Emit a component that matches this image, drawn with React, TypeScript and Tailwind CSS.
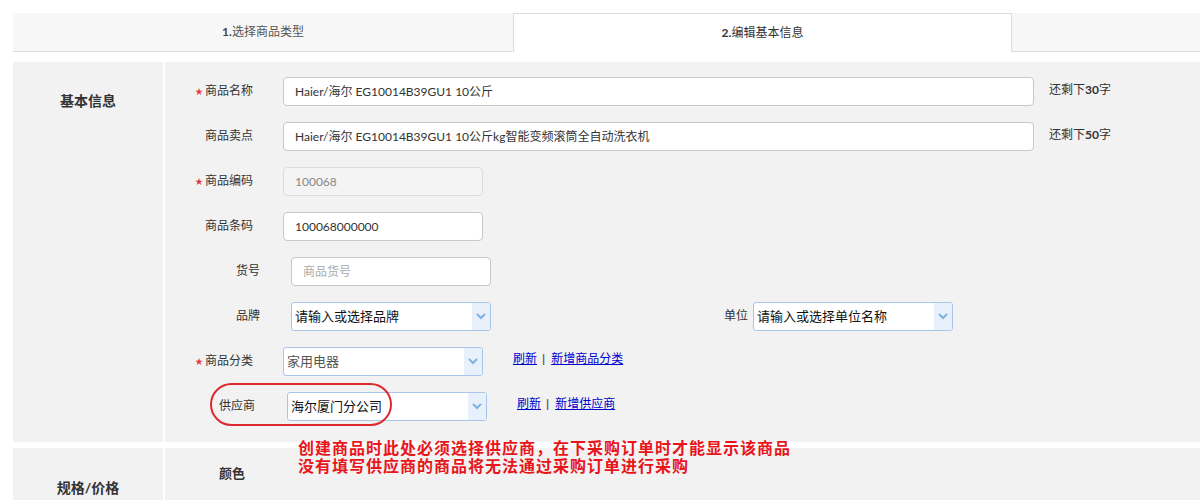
import React from 'react';

const FONT = { fontFamily: 'Lato, "Noto Sans CJK SC", sans-serif' };

function Star() {
  return <span className="mr-[2px] text-[8px] leading-none text-[#e4393c]">★</span>;
}

function Label({ width, star, children }: { width: string; star?: boolean; children: React.ReactNode }) {
  return (
    <div className={`${width} flex shrink-0 items-center justify-end self-start pt-[5px] text-[12px] text-[#333]`}>
      {star && <Star />}
      <span>{children}</span>
    </div>
  );
}

function Input({ value, className, disabled, placeholder }: { value?: string; className: string; disabled?: boolean; placeholder?: string }) {
  return (
    <div
      className={`${className} flex h-[29px] shrink-0 items-center rounded-[4px] border px-[11px] text-[12px] ${
        disabled ? 'border-[#dcdcdc] bg-[#f3f4f3] text-[#888]' : 'border-[#c8c8c8] bg-white text-[#333]'
      }`}
    >
      {value ? <span>{value}</span> : <span className="text-[#aaa]">{placeholder}</span>}
    </div>
  );
}

function Chevron() {
  return (
    <svg width="10" height="7" viewBox="0 0 10 7" fill="none">
      <path d="M1.5 1.5L5 5l3.5-3.5" stroke="#7fb3e2" strokeWidth="2" strokeLinecap="round" />
    </svg>
  );
}

function Select({ value, className, muted }: { value: string; className: string; muted?: boolean }) {
  return (
    <div className={`${className} flex h-[29px] w-[200px] shrink-0 items-stretch overflow-hidden rounded-[3px] border border-[#a8c6ea] bg-white`}>
      <span className={`flex flex-1 items-center pl-[3px] text-[13px] ${muted ? 'text-[#555]' : 'text-[#111]'}`}>{value}</span>
      <span className="flex w-[18px] items-center justify-center bg-[#e8f0fb]">
        <Chevron />
      </span>
    </div>
  );
}

function Links({ add, className }: { add: string; className: string }) {
  return (
    <div className={`${className} flex items-center self-start pt-[3px] text-[12px]`}>
      <a className="text-[#0000cc] underline">刷新</a>
      <span className="ml-[5px] mr-[6px] font-bold text-[#555]">|</span>
      <a className="text-[#0000cc] underline">{add}</a>
    </div>
  );
}

export default function App() {
  return (
    <div className="relative min-h-[500px] bg-white pl-[13px] pt-[13px]" style={FONT}>
      {/* Steps */}
      <div className="flex h-[39px] text-[12px]">
        <div className="flex w-[501px] items-center justify-center border-b border-r border-[#dcdcdc] bg-[#f7f7f7] text-[#555]">
          <b className="text-[#444]">1.</b>选择商品类型
        </div>
        <div className="flex w-[497px] items-center justify-center border-t border-[#dcdcdc] bg-white text-[#333]">
          <b>2.</b>编辑基本信息
        </div>
        <div className="flex-1 border-b border-l border-[#dcdcdc] bg-[#f7f7f7]" />
      </div>

      {/* 基本信息 */}
      <div className="mt-[10px] flex h-[380px] gap-[2px]">
        <div className="w-[150px] shrink-0 bg-[#f2f2f2] pt-[28px] text-center text-[14px] font-bold text-[#333]">基本信息</div>
        <div className="flex flex-1 flex-col gap-[16px] bg-[#f2f2f2] pt-[15px]">
          <div className="flex h-[29px]">
            <Label width="w-[88px]" star>商品名称</Label>
            <Input className="ml-[30px] w-[751px]" value="Haier/海尔 EG10014B39GU1 10公斤" />
            <span className="ml-[15px] self-start pt-[4px] text-[12px] text-[#333]">
              还剩下<b>30</b>字
            </span>
          </div>
          <div className="flex h-[29px]">
            <Label width="w-[88px]">商品卖点</Label>
            <Input className="ml-[30px] w-[751px]" value="Haier/海尔 EG10014B39GU1 10公斤kg智能变频滚筒全自动洗衣机" />
            <span className="ml-[15px] self-start pt-[4px] text-[12px] text-[#333]">
              还剩下<b>50</b>字
            </span>
          </div>
          <div className="flex h-[29px]">
            <Label width="w-[88px]" star>商品编码</Label>
            <Input className="ml-[30px] w-[200px]" value="100068" disabled />
          </div>
          <div className="flex h-[29px]">
            <Label width="w-[88px]">商品条码</Label>
            <Input className="ml-[30px] w-[200px]" value="100068000000" />
          </div>
          <div className="flex h-[29px]">
            <Label width="w-[95px]">货号</Label>
            <Input className="ml-[31px] w-[200px]" placeholder="商品货号" />
          </div>
          <div className="flex h-[29px]">
            <Label width="w-[95px]">品牌</Label>
            <Select className="ml-[31px]" value="请输入或选择品牌" />
            <Label width="w-[257px]">单位</Label>
            <Select className="ml-[5px]" value="请输入或选择单位名称" />
          </div>
          <div className="flex h-[29px]">
            <Label width="w-[88px]" star>商品分类</Label>
            <Select className="ml-[30px]" value="家用电器" muted />
            <Links className="ml-[30px]" add="新增商品分类" />
          </div>
          <div className="relative flex h-[29px]">
            <Label width="w-[90px]">供应商</Label>
            <Select className="ml-[32px]" value="海尔厦门分公司" />
            <Links className="ml-[30px]" add="新增供应商" />
            <div className="pointer-events-none absolute left-[45px] top-[-9px] h-[43px] w-[182px] rounded-[22px] border-2 border-[#dd2a30]" />
          </div>
        </div>
      </div>

      {/* 规格/价格 */}
      <div className="mt-[6px] flex h-[60px] gap-[2px]">
        <div className="w-[150px] shrink-0 bg-[#f2f2f2] pt-[29px] text-center text-[14px] font-bold text-[#333]">规格/价格</div>
        <div className="flex-1 bg-[#f2f2f2] pl-[54px] pt-[16px] text-[13px] font-bold text-[#333]">颜色</div>
      </div>

      {/* annotation */}
      <div className="absolute left-[298px] top-[439px] text-[16px] font-bold leading-[18px] tracking-[1px] text-[#e8151b]">
        <div>创建商品时此处必须选择供应商，在下采购订单时才能显示该商品</div>
        <div>没有填写供应商的商品将无法通过采购订单进行采购</div>
      </div>
    </div>
  );
}
